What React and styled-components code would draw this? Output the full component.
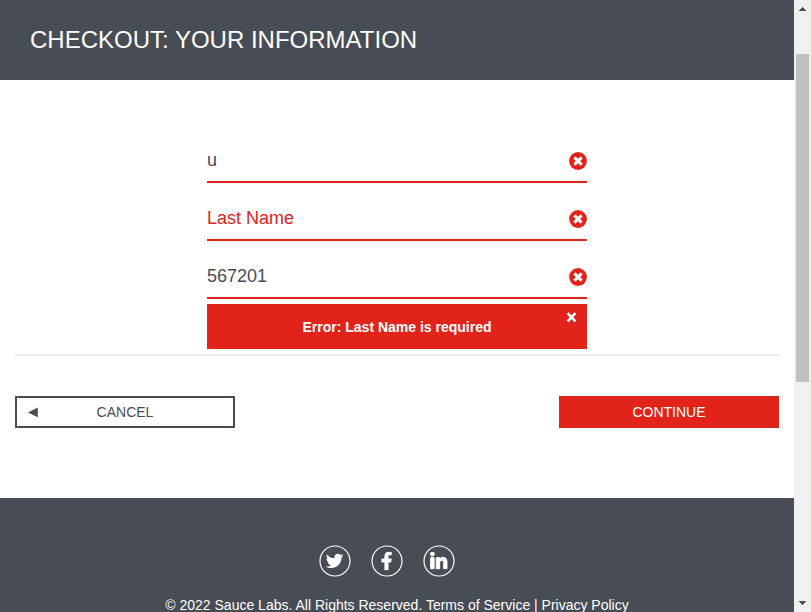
import React from 'react';
import styled, { createGlobalStyle } from 'styled-components';
import { FaTwitter, FaFacebookF, FaLinkedinIn } from 'react-icons/fa';

const slate = '#474c55';
const red = '#e2231a';

const GlobalStyle = createGlobalStyle`
  * { box-sizing: border-box; }
  body { margin: 0; overflow: hidden; background: #fff; font-family: "Liberation Sans", Arial, sans-serif; }
`;

const Window = styled.div`
  display: flex;
  width: 811px;
  height: 612px;
  overflow: hidden;
`;

const Page = styled.div`
  width: 794px;
  height: 612px;
  overflow: hidden;
  display: flex;
  flex-direction: column;
`;

const Header = styled.header`
  flex: none;
  height: 80px;
  padding: 0 30px;
  display: flex;
  align-items: center;
  background: ${slate};
`;

const Title = styled.h1`
  margin: 0;
  font-size: 24px;
  font-weight: 400;
  line-height: 28px;
  color: #fff;
`;

const Form = styled.form`
  flex: none;
  height: 418px;
  padding: 58px 15px 0;
`;

const Fields = styled.div`
  width: 380px;
  margin: 0 auto;
`;

const Field = styled.label`
  display: flex;
  align-items: center;
  height: 45px;
  margin-bottom: 13px;
  border-bottom: 2px solid ${red};

  &:last-of-type { margin-bottom: 5px; }
`;

const Input = styled.input`
  flex: 1;
  min-width: 0;
  height: 42px;
  padding: 2px 0 0;
  border: 0;
  outline: 0;
  background: transparent;
  font: 400 18px "Liberation Sans", Arial, sans-serif;
  color: #484c55;

  &::placeholder { color: ${red}; opacity: 1; }
`;

const FieldIcon = styled.svg`
  flex: none;
  width: 18px;
  height: 18px;
  margin-top: 3px;
`;

const ErrorBox = styled.div`
  position: relative;
  height: 45px;
  display: flex;
  align-items: center;
  justify-content: center;
  background: ${red};
  color: #fff;
`;

const ErrorText = styled.h3`
  margin: 0;
  font-size: 14px;
  line-height: 16px;
  font-weight: 700;
`;

const Dismiss = styled.button`
  position: absolute;
  top: 8px;
  right: 10px;
  display: flex;
  padding: 0;
  border: 0;
  background: none;
`;

const Actions = styled.div`
  display: flex;
  justify-content: space-between;
  margin-top: 5px;
  padding-top: 40px;
  border-top: 2px solid #ededed;
`;

const Button = styled.button`
  position: relative;
  display: flex;
  align-items: center;
  justify-content: center;
  width: 220px;
  height: 32px;
  padding: 0;
  border: 2px solid ${p => (p.$primary ? red : slate)};
  background: ${p => (p.$primary ? red : '#fff')};
  color: ${p => (p.$primary ? '#fff' : slate)};
  font: 400 14px/16px "Liberation Sans", Arial, sans-serif;
`;

const BackArrow = styled.svg`
  position: absolute;
  left: 11px;
  top: 9px;
`;

const Footer = styled.footer`
  flex: none;
  height: 160px;
  padding-top: 47px;
  background: ${slate};
  color: #fff;
`;

const Social = styled.div`
  display: flex;
  justify-content: center;
  gap: 20px;
  width: 774px;
`;

const SocialLink = styled.a`
  display: flex;
  width: 32px;
  height: 32px;
  color: #fff;
`;

const Copyright = styled.div`
  margin-top: 20px;
  text-align: center;
  font-size: 14px;
  line-height: 16px;
`;

const ScrollTrack = styled.div`
  display: flex;
  flex-direction: column;
  align-items: center;
  width: 17px;
  height: 612px;
  background: #f0f0f0;
`;

const ScrollArrow = styled.svg`
  flex: none;
  width: 17px;
  height: 17px;
`;

const ScrollThumb = styled.div`
  width: 13px;
  height: 328px;
  margin: 37px 0 auto;
  background: #c1c1c1;
`;

const fields = [
  { name: 'first', placeholder: 'First Name', value: 'u' },
  { name: 'last', placeholder: 'Last Name', value: '' },
  { name: 'zip', placeholder: 'Zip/Postal Code', value: '567201' },
];

const socials = [
  { name: 'Twitter', Icon: FaTwitter, size: 17.5, x: 6.8, y: 7.2, weight: 0 },
  { name: 'Facebook', Icon: FaFacebookF, size: 18.5, x: 6.4, y: 6.8, weight: 12 },
  { name: 'LinkedIn', Icon: FaLinkedinIn, size: 19, x: 6.2, y: 7.1, weight: 26 },
];

function SocialIcon({ name, Icon, size, x, y, weight }) {
  return (
    <SocialLink aria-label={name}>
      <svg width="32" height="32" viewBox="0 0 32 32">
        <circle cx="16" cy="16" r="15" fill="none" stroke="#fff" strokeWidth="1.2" />
        <Icon x={x} y={y} size={size} stroke="#fff" strokeWidth={weight} />
      </svg>
    </SocialLink>
  );
}

export default function App() {
  return (
    <>
      <GlobalStyle />
      <Window>
        <Page>
          <Header><Title>CHECKOUT: YOUR INFORMATION</Title></Header>
          <Form>
            <Fields>
              {fields.map(f => (
                <Field key={f.name}>
                  <Input placeholder={f.placeholder} defaultValue={f.value} />
                  <FieldIcon viewBox="0 0 18 18">
                    <circle cx="9" cy="9" r="8.9" fill={red} />
                    <path d="M5.4 5.4L12.6 12.6M12.6 5.4L5.4 12.6" stroke="#fff" strokeWidth="3" />
                  </FieldIcon>
                </Field>
              ))}
              <ErrorBox>
                <ErrorText>Error: Last Name is required</ErrorText>
                <Dismiss type="button" aria-label="Dismiss">
                  <svg width="11" height="11" viewBox="0 0 11 11">
                    <path d="M1.6 1.2L9.4 9.4M9.4 1.2L1.6 9.4" stroke="#fff" strokeWidth="2.6" />
                  </svg>
                </Dismiss>
              </ErrorBox>
            </Fields>
            <Actions>
              <Button type="button">
                <BackArrow width="10" height="11" viewBox="0 0 10 11">
                  <path d="M9.8 0.6V10.3L0 5.5Z" fill={slate} />
                </BackArrow>
                CANCEL
              </Button>
              <Button type="button" $primary>CONTINUE</Button>
            </Actions>
          </Form>
          <Footer>
            <Social>
              {socials.map(s => <SocialIcon key={s.name} {...s} />)}
            </Social>
            <Copyright>© 2022 Sauce Labs. All Rights Reserved. Terms of Service | Privacy Policy</Copyright>
          </Footer>
        </Page>
        <ScrollTrack>
          <ScrollArrow viewBox="0 0 17 17" shapeRendering="crispEdges">
            <path d="M8 7h1v1h1v1h1v1h1v1H5v-1h1V9h1V8h1Z" fill="#505050" />
          </ScrollArrow>
          <ScrollThumb />
          <ScrollArrow viewBox="0 0 17 17" shapeRendering="crispEdges">
            <path d="M5 6h7v1h-1v1h-1v1H9v1H8V9H7V8H6V7H5Z" fill="#505050" />
          </ScrollArrow>
        </ScrollTrack>
      </Window>
    </>
  );
}
